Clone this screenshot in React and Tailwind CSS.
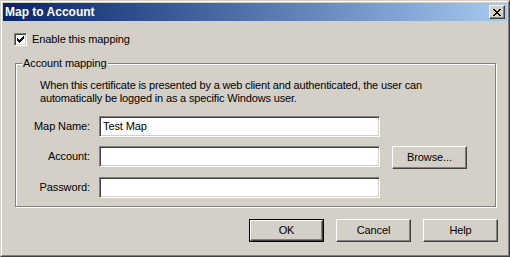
import React from 'react'

const raised = 'bg-[#d4d0c8] border border-t-white border-l-white border-r-[#404040] border-b-[#404040] shadow-[inset_-1px_-1px_0_#808080]'
const sunken = 'bg-white border border-t-[#808080] border-l-[#808080] border-r-white border-b-white shadow-[inset_1px_1px_0_#404040,inset_-1px_-1px_0_#d4d0c8]'

function Button({ children, isDefault }) {
  if (isDefault) {
    return (
      <div className="w-[75px] h-[23px] border border-black">
        <div className={`${raised} w-full h-full flex items-center justify-center`}>{children}</div>
      </div>
    )
  }
  return <div className={`${raised} w-[75px] h-[23px] flex items-center justify-center`}>{children}</div>
}

function Field({ label, value, children }) {
  return (
    <div className="flex items-start h-[21px]">
      <div className="w-[74px] h-[21px] flex items-center justify-end">{label}</div>
      <div className={`${sunken} ml-[9px] w-[281px] h-[21px] flex items-center pl-[3px]`}>{value}</div>
      {children}
    </div>
  )
}

export default function App() {
  return (
    <div
      className="w-[510px] h-[257px] bg-[#d4d0c8] border border-t-[#d4d0c8] border-l-[#d4d0c8] border-r-[#404040] border-b-[#404040] text-[11px] leading-[13px] tracking-[-0.1px] text-black"
      style={{ fontFamily: '"Liberation Sans", Arial, sans-serif' }}
    >
      <div className="h-full border border-t-white border-l-white border-r-[#808080] border-b-[#808080] p-px flex flex-col">
        {/* Title bar */}
        <div className="h-[18px] flex items-center bg-gradient-to-r from-[#0a246a] to-[#a6caf0] pl-[2px] pr-[2px]">
          <span className="text-white font-bold text-[12px] tracking-normal">Map to Account</span>
          <div className={`${raised} ml-auto w-[16px] h-[14px] flex items-center justify-center`}>
            <svg width="8" height="7" viewBox="0 0 8 7" shapeRendering="crispEdges">
              <path d="M0 0h2v1H0zM6 0h2v1H6zM1 1h2v1H1zM5 1h2v1H5zM2 2h4v1H2zM3 3h2v1H3zM2 4h4v1H2zM1 5h2v1H1zM5 5h2v1H5zM0 6h2v1H0zM6 6h2v1H6z" fill="#000" />
            </svg>
          </div>
        </div>

        {/* Content */}
        <div className="flex-1 flex flex-col">
          <div className="mt-[12px] ml-[11px] flex items-center h-[13px]">
            <div className={`${sunken} w-[13px] h-[13px] flex items-center justify-center`}>
              <svg width="7" height="7" viewBox="0 0 7 7" shapeRendering="crispEdges">
                <path d="M6 0h1v3H6zM5 1h1v3H5zM4 2h1v3H4zM3 3h1v3H3zM2 4h1v3H2zM1 3h1v3H1zM0 2h1v3H0z" fill="#000" />
              </svg>
            </div>
            <span className="ml-[5px]">Enable this mapping</span>
          </div>

          {/* Group box */}
          <div className="relative mt-[17px] ml-[12px] w-[481px] h-[144px] border border-[#808080] shadow-[inset_1px_1px_0_#fff,1px_1px_0_#fff]">
            <span className="absolute left-[6px] -top-[7px] bg-[#d4d0c8] px-px">Account mapping</span>
            <p className="mt-[15px] ml-[24px] tracking-[-0.16px]">
              When this certificate is presented by a web client and authenticated, the user can
              <br />
              automatically be logged in as a specific Windows user.
            </p>
            <div className="mt-[11px] flex flex-col gap-[9px]">
              <Field label="Map Name:" value="Test Map" />
              <Field label="Account:">
                <div className="ml-[12px]">
                  <Button>Browse...</Button>
                </div>
              </Field>
              <div className="mt-px">
                <Field label="Password:" />
              </div>
            </div>
          </div>

          {/* Buttons */}
          <div className="mt-[12px] flex justify-end gap-[12px] pr-[9px]">
            <Button isDefault>OK</Button>
            <Button>Cancel</Button>
            <Button>Help</Button>
          </div>
        </div>
      </div>
    </div>
  )
}
